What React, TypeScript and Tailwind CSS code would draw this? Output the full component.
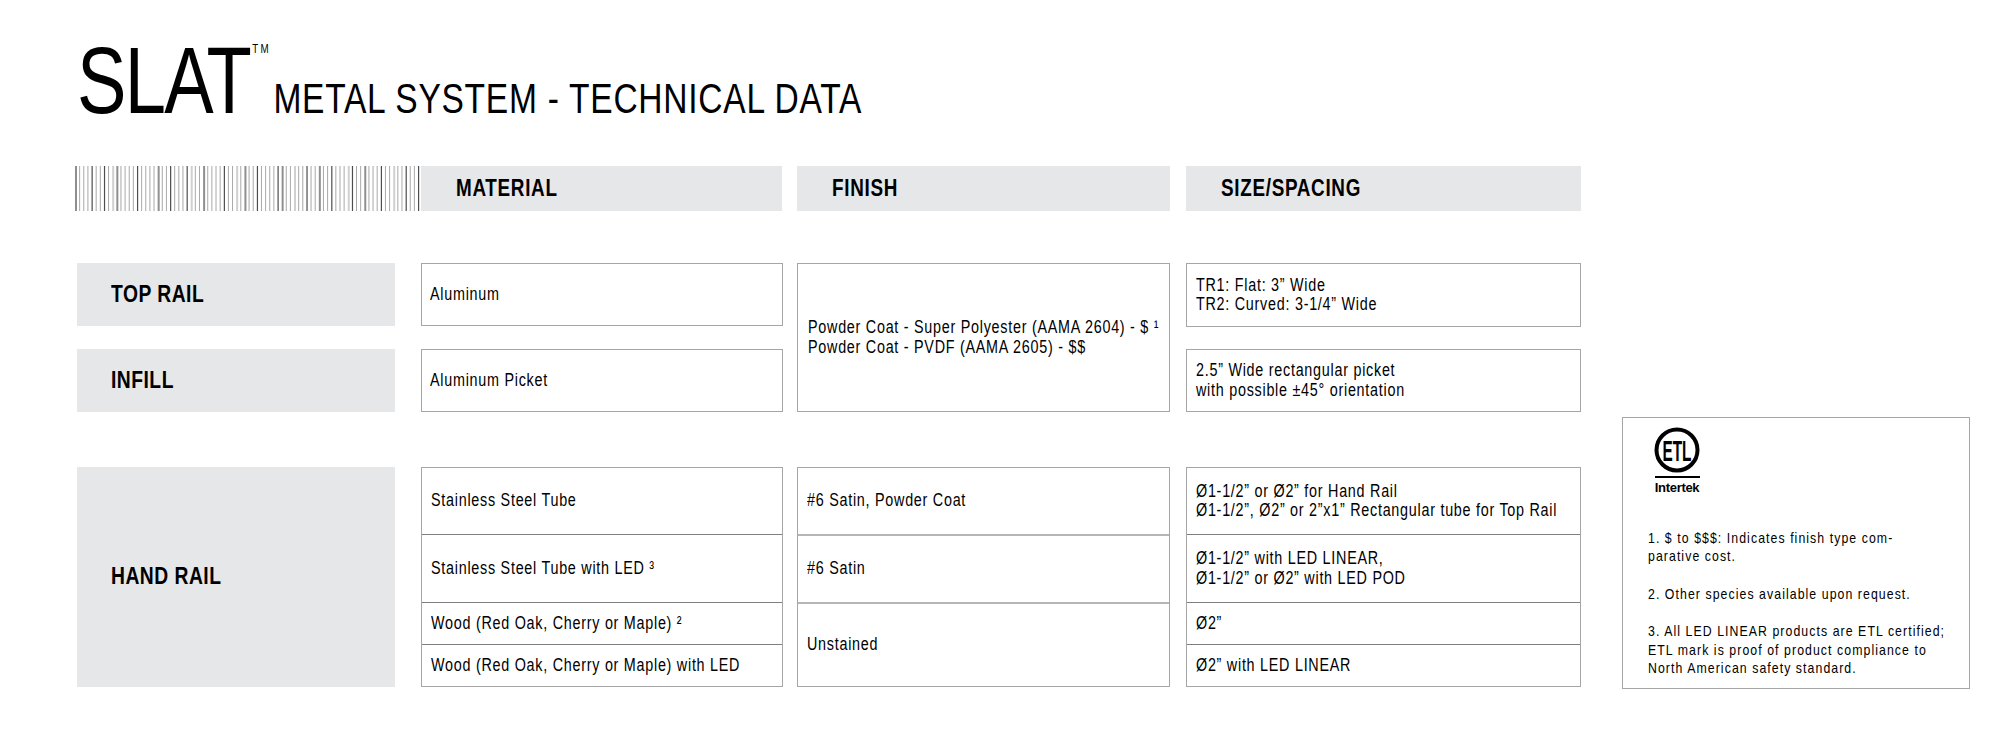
import React from "react";

const BAR_PATTERN =
  "mllldlldlxmlllldllllmlldllldxllmlllldllxlmlldlllldmllxlldllmlldlllxdllmllldllxlldlld";

const BAR_STYLE: Record<string, { c: string; w: number }> = {
  d: { c: "#4d4d4d", w: 1.2 },
  m: { c: "#8f8f8f", w: 2 },
  l: { c: "#a9a9a9", w: 1 },
  x: { c: "#d0d0d0", w: 2 },
};

function Barcode() {
  const step = 343 / (BAR_PATTERN.length - 1);
  return (
    <svg width="345" height="45" viewBox="0 0 345 45" className="block shrink-0">
      {BAR_PATTERN.split("").map((ch, i) => {
        const s = BAR_STYLE[ch];
        return <rect key={i} x={i * step} y={0} width={s.w} height={45} fill={s.c} />;
      })}
    </svg>
  );
}

function EtlLogo() {
  return (
    <div className="flex w-[46px] flex-col items-center">
      <svg width="46" height="46" viewBox="0 0 46 46" className="block">
        <circle cx="23" cy="23" r="20.5" fill="none" stroke="#000" strokeWidth="4" />
        <text
          x="23"
          y="33.5"
          textAnchor="middle"
          fontSize="29"
          fontWeight="700"
          textLength="29"
          lengthAdjust="spacingAndGlyphs"
          fontFamily="'Liberation Sans',sans-serif"
        >
          ETL
        </text>
      </svg>
      <div className="mt-[3px] h-[1.5px] w-[45px] bg-black" />
      <div className="mt-[3px] font-['Liberation_Sans',sans-serif] text-[13px] font-bold leading-none tracking-[-0.3px]">
        Intertek
      </div>
    </div>
  );
}

// narrow face: Liberation Sans squeezed horizontally
function Cond({ children, className = "" }: { children: React.ReactNode; className?: string }) {
  return <div className={`origin-left scale-x-[0.82] whitespace-nowrap ${className}`}>{children}</div>;
}

function HeadCell({ label, className }: { label: string; className: string }) {
  return (
    <div className={`flex h-[45px] items-center bg-[#e6e7e8] pl-[35px] ${className}`}>
      <Cond className="text-[23px] font-bold tracking-[0.85px]">{label}</Cond>
    </div>
  );
}

function LabelBox({ label, className }: { label: string; className: string }) {
  return (
    <div className={`flex w-[318px] items-center bg-[#e6e7e8] pl-[34px] ${className}`}>
      <Cond className="text-[23.5px] font-bold tracking-[0.6px]">{label}</Cond>
    </div>
  );
}

function Lines({ lines }: { lines: string[] }) {
  return (
    <Cond className="text-[17.5px] leading-[19.5px] tracking-[0.9px]">
      {lines.map((l) => (
        <div key={l}>{l}</div>
      ))}
    </Cond>
  );
}

export default function App() {
  return (
    <div className="relative h-[729px] w-[2000px] bg-white font-['Liberation_Sans',Arial,sans-serif] text-black">
      <div className="pl-[77px] pt-[33px]">
        <h1 className="flex origin-left scale-x-[0.78] items-baseline leading-none whitespace-nowrap">
          <span className="text-[95px] tracking-[-2.2px]">
            SLAT
            <span className="ml-[3px] text-[12.5px] tracking-[3px] align-[60px]">TM</span>
          </span>
          <span className="ml-[3px] text-[43px] tracking-[0.95px]">METAL SYSTEM - TECHNICAL DATA</span>
        </h1>
      </div>

      <div className="mt-[38px] flex pl-[75px]">
        <Barcode />
        <HeadCell label="MATERIAL" className="ml-[1px] w-[361px]" />
        <HeadCell label="FINISH" className="ml-[15px] w-[373px]" />
        <HeadCell label="SIZE/SPACING" className="ml-[16px] w-[395px]" />
      </div>

      <div className="mt-[52px] flex pl-[77px]">
        <div className="flex flex-col">
          {/* top rail + infill */}
          <div className="flex h-[149px]">
            <div className="flex flex-col justify-between">
              <LabelBox label="TOP RAIL" className="h-[63px]" />
              <LabelBox label="INFILL" className="h-[63px]" />
            </div>
            <div className="ml-[26px] flex w-[362px] flex-col justify-between">
              <div className="flex h-[63px] items-center border border-[#a6a6a6] pl-[8px]">
                <Lines lines={["Aluminum"]} />
              </div>
              <div className="flex h-[63px] items-center border border-[#a6a6a6] pl-[8px]">
                <Lines lines={["Aluminum Picket"]} />
              </div>
            </div>
            <div className="ml-[14px] flex w-[373px] items-center border border-[#a6a6a6] pl-[10px]">
              <Lines
                lines={[
                  "Powder Coat - Super Polyester (AAMA 2604) - $ ¹",
                  "Powder Coat - PVDF (AAMA 2605) - $$",
                ]}
              />
            </div>
            <div className="ml-[16px] flex w-[395px] flex-col justify-between">
              <div className="flex h-[64px] items-center border border-[#a6a6a6] pl-[9px]">
                <Lines lines={["TR1: Flat: 3” Wide", "TR2: Curved: 3-1/4” Wide"]} />
              </div>
              <div className="flex h-[63px] items-center border border-[#a6a6a6] pl-[9px]">
                <Lines lines={["2.5” Wide rectangular picket", "with possible ±45° orientation"]} />
              </div>
            </div>
          </div>

          {/* hand rail */}
          <div className="mt-[55px] flex h-[220px]">
            <LabelBox label="HAND RAIL" className="h-full" />
            <div className="ml-[26px] flex w-[362px] flex-col border border-[#a6a6a6]">
              <div className="flex h-[66px] items-center pl-[9px]">
                <Lines lines={["Stainless Steel Tube"]} />
              </div>
              <div className="flex h-[68px] items-center border-t border-[#7f7f7f] pl-[9px]">
                <Lines lines={["Stainless Steel Tube with LED ³"]} />
              </div>
              <div className="flex h-[42px] items-center border-t border-[#7f7f7f] pl-[9px]">
                <Lines lines={["Wood (Red Oak, Cherry or Maple) ²"]} />
              </div>
              <div className="flex flex-1 items-center border-t border-[#7f7f7f] pl-[9px]">
                <Lines lines={["Wood (Red Oak, Cherry or Maple) with LED"]} />
              </div>
            </div>
            <div className="ml-[14px] flex w-[373px] flex-col border border-[#a6a6a6]">
              <div className="flex h-[66px] items-center pl-[9px]">
                <Lines lines={["#6 Satin, Powder Coat"]} />
              </div>
              <div className="flex h-[68px] items-center border-t-2 border-[#b5b5b5] pl-[9px]">
                <Lines lines={["#6 Satin"]} />
              </div>
              <div className="flex flex-1 items-center border-t-2 border-[#b5b5b5] pl-[9px]">
                <Lines lines={["Unstained"]} />
              </div>
            </div>
            <div className="ml-[16px] flex w-[395px] flex-col border border-[#a6a6a6]">
              <div className="flex h-[66px] items-center pl-[9px]">
                <Lines
                  lines={[
                    "Ø1-1/2” or Ø2” for Hand Rail",
                    "Ø1-1/2”, Ø2” or 2”x1” Rectangular tube for Top Rail",
                  ]}
                />
              </div>
              <div className="flex h-[68px] items-center border-t border-[#7f7f7f] pl-[9px]">
                <Lines lines={["Ø1-1/2” with LED LINEAR,", "Ø1-1/2” or Ø2” with LED POD"]} />
              </div>
              <div className="flex h-[42px] items-center border-t border-[#7f7f7f] pl-[9px]">
                <Lines lines={["Ø2”"]} />
              </div>
              <div className="flex flex-1 items-center border-t border-[#7f7f7f] pl-[9px]">
                <Lines lines={["Ø2” with LED LINEAR"]} />
              </div>
            </div>
          </div>
        </div>

        {/* notes */}
        <div className="mb-[-2px] ml-[41px] h-[272px] w-[348px] self-end border border-[#a6a6a6] pl-[25px] pt-[9px]">
          <div className="ml-[6px]">
            <EtlLogo />
          </div>
          <Cond className="mt-[35px] text-[15px] leading-[18.7px] tracking-[1.3px]">
            <p>
              1. $ to $$$: Indicates finish type com-
              <br />
              parative cost.
            </p>
            <p className="mt-[18.7px]">2. Other species available upon request.</p>
            <p className="mt-[18.7px]">
              3. All LED LINEAR products are ETL certified;
              <br />
              ETL mark is proof of product compliance to
              <br />
              North American safety standard.
            </p>
          </Cond>
        </div>
      </div>
    </div>
  );
}
